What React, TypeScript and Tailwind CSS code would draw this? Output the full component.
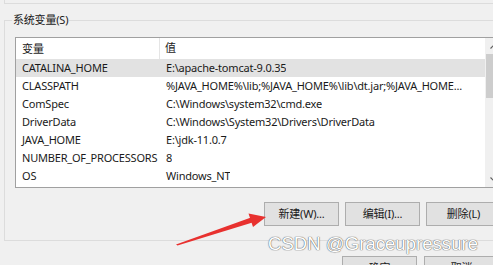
const rows: [string, string][] = [
  ["CATALINA_HOME", "E:\\apache-tomcat-9.0.35"],
  ["CLASSPATH", "%JAVA_HOME%\\lib;%JAVA_HOME%\\lib\\dt.jar;%JAVA_HOME..."],
  ["ComSpec", "C:\\Windows\\system32\\cmd.exe"],
  ["DriverData", "C:\\Windows\\System32\\Drivers\\DriverData"],
  ["JAVA_HOME", "E:\\jdk-11.0.7"],
  ["NUMBER_OF_PROCESSORS", "8"],
  ["OS", "Windows_NT"],
];

function WinButton({ label }: { label: string }) {
  return (
    <div className="flex h-[24px] w-[75px] shrink-0 items-center justify-center border border-[#adadad] bg-[#e1e1e1] text-[11px] tracking-[-0.2px] text-[#1a1a1a]">
      {label}
    </div>
  );
}

export default function App() {
  return (
    <div
      className="relative h-[265px] w-[493px] overflow-hidden bg-[#f0f0f0] text-[#1a1a1a]"
      style={{ fontFamily: '"Noto Sans", "Noto Sans CJK SC", sans-serif' }}
    >
      {/* bottom edge of the previous group */}
      <div className="ml-[4px] h-[4px] w-[520px] border-b border-l border-[#dcdcdc]" />

      {/* system variables group */}
      <div className="relative ml-[4px] mt-[16px] h-[221px] w-[520px] border border-[#dcdcdc]">
        <span className="absolute left-[7px] top-[-9px] bg-[#f0f0f0] px-[1px] text-[11px] leading-[16px] tracking-[-0.2px]">
          系统变量(S)
        </span>

        <div className="ml-[10px] mt-[16px] flex h-[151px] w-[505px] overflow-hidden border border-[#a0a0a0] bg-white">
          <div className="w-[469px] shrink-0">
            <div className="flex h-[21px] items-center text-[11px]">
              <div className="h-full w-[144px] border-r border-[#e5e5e5] pl-[6px] leading-[21px]">变量</div>
              <div className="pl-[5px]">值</div>
            </div>
            {rows.map(([name, value], i) => (
              <div
                key={name}
                className={`flex h-[18px] items-center whitespace-nowrap text-[11px] tracking-[-0.2px] ${i === 0 ? "bg-[#e2e2e2]" : ""}`}
              >
                <div className="w-[144px] shrink-0 pl-[6px]">{name}</div>
                <div className="overflow-hidden pl-[6px]">{value}</div>
              </div>
            ))}
          </div>
          <div className="flex w-[17px] shrink-0 flex-col bg-[#f0f0f0]">
            <div className="flex h-[16px] items-center justify-center">
              <svg width="8" height="5" viewBox="0 0 8 5">
                <path d="M0.5 4.5 L4 1 L7.5 4.5" fill="none" stroke="#606060" strokeWidth="1.2" />
              </svg>
            </div>
            <div className="mx-[1px] h-[44px] bg-[#cdcdcd]" />
            <div className="flex-1" />
            <div className="flex h-[16px] items-center justify-center">
              <svg width="8" height="5" viewBox="0 0 8 5">
                <path d="M0.5 0.5 L4 4 L7.5 0.5" fill="none" stroke="#606060" strokeWidth="1.2" />
              </svg>
            </div>
          </div>
        </div>

        <div className="ml-[259px] mt-[14px] flex gap-[6px]">
          <WinButton label="新建(W)..." />
          <WinButton label="编辑(I)..." />
          <WinButton label="删除(L)" />
        </div>
      </div>

      {/* dialog buttons */}
      <div className="ml-[342px] mt-[15px] flex gap-[7px]">
        <WinButton label="确定" />
        <WinButton label="取消" />
      </div>

      {/* red annotation arrow */}
      <svg className="absolute left-0 top-0" width="493" height="265" viewBox="0 0 493 265">
        <polygon points="176,244.5 251,217.5 252.5,222.5 177.5,245.5" fill="#e8312f" />
        <polygon points="266,217 248.5,213.5 253,227" fill="#e8312f" />
      </svg>

      {/* watermark */}
      <div
        className="absolute left-[268px] top-[233px] whitespace-nowrap text-[18.6px] leading-[22px] text-white [text-shadow:0_0_1px_#555,0_0_1px_#555]"
        style={{ fontFamily: '"Liberation Sans", Arial, sans-serif' }}
      >
        CSDN @Graceupressure
      </div>
    </div>
  );
}
